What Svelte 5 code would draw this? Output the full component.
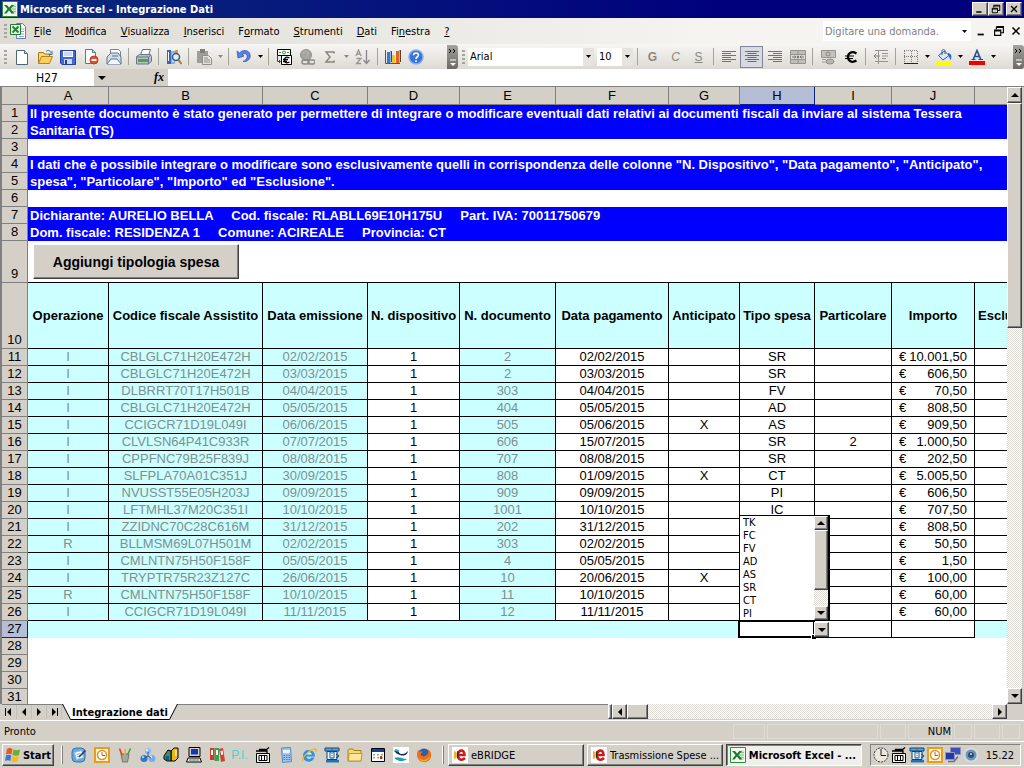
<script lang="ts">
  type Tool = { icon?: string; label?: string; arrow?: boolean; muted?: boolean; sep?: boolean; active?: boolean };

  const icons: Record<string, string> = {
    excel:
      '<path d="M.500.500h15v15H.500z" fill="#f4faf0" stroke="#2c8c3c"/><path d="M9 3h5v10H9z" fill="#d4ecd0"/><path d="M9 5.500h5M9 8h5M9 10.500h5" stroke="#8cc48c"/><path d="M2 4h3l2 2.500L9.500 4H12L8.500 8l4 4.500h-3L7 9.500 4.500 12.500H2L5.500 8z" fill="#1c7830"/>',
    sheet:
      '<path d="M6.500.500h6l3 3v12h-9z" fill="#fff" stroke="#5b7cc0"/><path d="M9 6h5M9 8.500h5M9 11h5M9 13.500h5" stroke="#8fa8dc"/><path d="M.500 1.500h10v10H.500z" fill="#e4f3e0" stroke="#1f7a34"/><path d="M2.500 3.500l6 6M8.500 3.500l-6 6" stroke="#238238" stroke-width="2"/>',
    blank: '<path d="M2.500 1.500h8l3 3v11h-11z" fill="#fff" stroke="#4a6484"/><path d="M10.500 1.500v3h3" fill="#c8dcf4" stroke="#4a6484"/>',
    open:
      '<path d="M1.500 14V3.500h5l1 1.500h5v3" fill="#f8d878" stroke="#a67a18"/><path d="M1.500 14.500l3-7h11l-3 7z" fill="#fcd058" stroke="#b4841c"/><path d="M9 2.500c2-2 4-1 5 1l1-1v3h-3l1-1" fill="none" stroke="#3c64a8"/>',
    save:
      '<path d="M.500 1.500h15v14H2l-1.500-1.500z" fill="#4468d4" stroke="#24409c"/><path d="M3 2h10v6H3z" fill="#f4f8ff"/><path d="M4 10h8v5H4z" fill="#ccd8f0"/><path d="M5 11h2v4H5z" fill="#24409c"/><path d="M4 4h8M4 6h8" stroke="#a4b8e8"/>',
    deny:
      '<path d="M2.500.500h7l3 3v11h-10z" fill="#fff" stroke="#5878a0"/><path d="M9.500.500v3h3" fill="#b8ccec" stroke="#5878a0"/><circle cx="11" cy="11" r="4" fill="#e4502c" stroke="#c03c1c"/><path d="M8.500 11h5" stroke="#fff" stroke-width="2"/>',
    mail:
      '<path d="M4.500 5V.500h8l2 2V12" fill="#fff" stroke="#70849c"/><path d="M1 8l4-4h7l3 4v7H1z" fill="#d0dcec" stroke="#60748c"/><path d="M1 15l4-5h6l4 5" fill="#f4f8fc" stroke="#60748c"/><path d="M6 7h6" stroke="#60748c"/>',
    print:
      '<path d="M4.500 6l2-5.500h8l-2 6" fill="#fff" stroke="#607490"/><path d="M.500 7.500l3-2h11l1 2v5l-3 2.500h-12z" fill="#b8c0cc" stroke="#687888"/><path d="M2 10h10v3H2z" fill="#44a848"/><path d="M.500 8h12l2.500-2M12.500 8v7" stroke="#687888" fill="none"/>',
    research:
      '<path d="M1 1h4v14H1z" fill="#3468c0"/><path d="M5 2h4v13H5z" fill="#88b0e8"/><path d="M2.500 3v9M7 4v9" stroke="#fff"/><path d="M9 1h3v7H9z" fill="#d0a030"/><circle cx="10" cy="8" r="3.500" fill="#dceeff" stroke="#405878" stroke-width="1.500"/><path d="M12.500 11l3 4" stroke="#b07820" stroke-width="2"/>',
    paste:
      '<path d="M1 2h11v12H1z" fill="#a09e98"/><path d="M4 0h5v4H4z" fill="#808078"/><path d="M6.500 6.500h6l3 3v6h-9z" fill="#e4e2dc" stroke="#90908a"/><path d="M8 9h4M8 11h6M8 13h6" stroke="#90908a"/>',
    undo: '<path d="M1 2l1 7 6-2-2-1.500c3-2 6 0 5 3-.5 2-2 3-4 4 5 .5 8-3 7-7C13 1 7 0 3.500 4z" fill="#5484e4" stroke="#2850b0" stroke-width=".7"/>',
    convert:
      '<path d="M1.500.500h13v6h-13z" fill="#fff" stroke="#000"/><circle cx="8" cy="3.500" r="1.500" fill="none" stroke="#18a030"/><path d="M3 3.500h2M11 3.500h2" stroke="#18a030"/><path d="M5.500 6.500h10v9h-10z" fill="#fff" stroke="#000"/><path d="M13.500 9c-4-2-5 0-5 2s1 4 5 2M7 10.500h5M7 12.500h4" fill="none" stroke="#000" stroke-width="1.300"/><path d="M1.500 7v5.500H4M3 11l1.500 1.500L3 14" fill="none" stroke="#1848c0"/>',
    globe:
      '<circle cx="7" cy="6" r="5.500" fill="#a6a49e" stroke="#94928c"/><path d="M3 5c2-3 5-3 6-1s-2 3-2 5" stroke="#bcbab4" fill="none"/><rect x="3" y="11" width="7" height="4" rx="2" fill="none" stroke="#8c8a84" stroke-width="1.500"/><rect x="9" y="11" width="7" height="4" rx="2" fill="none" stroke="#8c8a84" stroke-width="1.500"/>',
    sum: '<path d="M12 4.500V3H4l4 5-4 5h8v-1.500" fill="none" stroke="#888680" stroke-width="1.500"/>',
    sort:
      '<path d="M1 7l2.500-6L6 7M2 5h3M1.500 9.500H6L1.500 14.500H6" fill="none" stroke="#98968f" stroke-width="1.300"/><path d="M11.500 1v13M8.500 11l3 3.500 3-3.500" fill="none" stroke="#88868f" stroke-width="1.300"/>',
    chart:
      '<path d="M.500 1v13.500H15" fill="none" stroke="#285cb0"/><path d="M2 3h3.500v11H2z" fill="#3878d8"/><path d="M6.500 6H10v8H6.500z" fill="#f0c038"/><path d="M11 2h3.500v12H11z" fill="#e06028"/><path d="M5.500 3l1-1v11M14.500 2l1-1v12" stroke="#60402c" fill="none"/>',
    help:
      '<circle cx="8" cy="8" r="7" fill="#3474e0" stroke="#8cb0ec" stroke-width="1.500"/><path d="M5.500 6.300c0-3 5-3 5-.3C10.500 8 8 7.500 8 10" fill="none" stroke="#fff" stroke-width="1.600"/><path d="M7.200 11.300h1.600v1.600H7.200z" fill="#fff"/>',
    left: '<path d="M1 2.500h14M1 4.500h9M1 6.500h14M1 8.500h9M1 10.500h14M1 12.500h9" stroke="#74726c"/>',
    center: '<path d="M1 2.500h14M3.500 4.500h9M1 6.500h14M3.500 8.500h9M1 10.500h14M3.500 12.500h9" stroke="#686c78"/>',
    right: '<path d="M1 2.500h14M6 4.500h9M1 6.500h14M6 8.500h9M1 10.500h14M6 12.500h9" stroke="#74726c"/>',
    merge:
      '<path d="M.500 1.500h15v13H.500z" fill="#c0beb8" stroke="#96948e"/><path d="M1 5.500h14M1 10.500h14M8 1v4M8 11v4" stroke="#96948e"/><path d="M1 6h14v4H1z" fill="#dedcd6"/><path d="M2 8h4M10 8h4M4.500 6.500L6 8 4.500 9.500M11.500 6.500L10 8l1.500 1.500M7.500 7h1v2h-1z" stroke="#76746e" fill="none"/>',
    money:
      '<path d="M1.500 1.500h14v7h-14z" fill="#c4c2bc" stroke="#94928c"/><circle cx="8" cy="5" r="2" fill="none" stroke="#86847e"/><ellipse cx="10" cy="12.500" rx="4" ry="2.500" fill="#b8b6b0" stroke="#8e8c86"/><path d="M2 10.500h4M2 13h4" stroke="#9e9c96"/>',
    euro: '<path d="M13.500 4.500C8.500 1.500 5 4.300 5 8s3.500 6.500 8.500 3.500" fill="none" stroke="#000" stroke-width="2.200"/><path d="M2 7h9M2 9.500h8" stroke="#000" stroke-width="1.200"/>',
    indent:
      '<path d="M2 1.500h13M9 4.500h6M9 7h6M9 9.500h4M2 12.500h13M5.500 1v14" stroke="#96948e"/><path d="M1 7h6M3.500 4.500L1 7l2.500 2.500" stroke="#86847e" fill="none"/>',
    borders:
      '<path d="M1.500 2v12M8.500 2v12M14.500 2v12M1 1.500h14M1 7.500h14" stroke="#7a7872" stroke-dasharray="1 1"/><path d="M1 14.500h14" stroke="#222"/>',
    fill:
      '<path d="M2.500 6.500l6-4.500 4.500 4.500-6 4.500z" fill="#dce8f8" stroke="#345c9c"/><path d="M6 6V2c0-2 3-2 3 0v3" fill="none" stroke="#345c9c"/><path d="M12 4c4 1 4 4 2.500 7-1-1-1-4-2.500-5z" fill="#2c64c4"/><path d="M0 12h16v4H0z" fill="#ffff00"/>',
    fontcolor:
      '<path d="M4 11L8 1.500l4 9.500M5.500 7.500h5" fill="none" stroke="#284c94" stroke-width="1.600"/><path d="M2.500 10.500h4M9.500 10.500H14" stroke="#284c94"/><path d="M0 12h16v4H0z" fill="#f00000"/>',
    windows:
      '<path d="M2 2c2-1.500 4-1 5.500 0L6.500 7.500C5 6.500 3 6.500 1 7.500z" fill="#e85820"/><path d="M8.500 2.500c2 1 4 1 6.500 0L14 8c-2 1-4.500 1-6.500 0z" fill="#68b030"/><path d="M1 8.500c2-1 4-1 5.300 0L5.300 14c-1.500-1-3.300-1-5.300 0z" fill="#3878d8"/><path d="M7.300 9c2 1 4.500 1 6.500 0l-1 5.500c-2 1-4.500 1-6.500 0z" fill="#f4bc20"/>',
    desktop:
      '<rect x="1" y="1" width="13" height="14" rx="4" fill="#64a8e0" stroke="#3078b8"/><path d="M3.500 5.500l7-2 2 7-7 2z" fill="#fff" stroke="#a4bcd4"/><path d="M5.500 7.500l4-1M6 9.500l4-1" stroke="#88a8c8"/><path d="M8 10l6.500-6.500" stroke="#203c68" stroke-width="1.600"/>',
    outlook:
      '<path d="M1 1h14v14H1z" fill="#fff4d8" stroke="#e89c20" stroke-width="2"/><circle cx="8" cy="8" r="4.500" fill="#fff" stroke="#dc9428" stroke-width="1.500"/><path d="M8 5v3.500h3" fill="none" stroke="#a4681c"/>',
    pencils:
      '<path d="M4 7l1.500 8h5L12 7z" fill="#a4a8a0" stroke="#747870"/><path d="M5 8L2.500 1.500" stroke="#d84020" stroke-width="1.600"/><path d="M8 8V2" stroke="#e8b028" stroke-width="1.600"/><path d="M10.500 8l3-6.500" stroke="#489c40" stroke-width="1.600"/>',
    cubes:
      '<circle cx="8" cy="4" r="3" fill="#8cb8ec"/><circle cx="7" cy="3" r="1.200" fill="#d8ecff"/><circle cx="4" cy="11.500" r="3.500" fill="#3874c4"/><circle cx="3" cy="10" r="1.200" fill="#a0c8f4"/><circle cx="12" cy="11.500" r="3.500" fill="#78acec"/><circle cx="11" cy="10" r="1.200" fill="#d8ecff"/><path d="M8 5v4l-3 2M8 9l3 2" fill="none" stroke="#2858a0"/>',
    shapes:
      '<path d="M8 14V4l3-3h4v10l-3 3z" fill="#e8b420" stroke="#000"/><path d="M1 9l4-6 3 1v10H4l-3-2z" fill="#38984c" stroke="#000"/><path d="M12 3h2v6h-2z" fill="#fce078"/><path d="M3 9h3v4H3z" fill="#185090"/>',
    computer:
      '<path d="M3 .500h11v9H3z" fill="#d4d0c8" stroke="#000"/><path d="M5 2h7v5.500H5z" fill="#1038b8"/><path d="M2 11h12l1.500 4H.500z" fill="#f0eee8" stroke="#000"/><path d="M3 13h10" stroke="#707068"/>',
    binders:
      '<path d="M1 1h4.500v12H1z" fill="#d83828"/><path d="M5.500 1H10v13H5.500z" fill="#3ca050"/><path d="M10 2l4-1 2 13-4 1z" fill="#c84438"/><path d="M2 3h2v5H2zM7 3h2v5H7zM11.500 4l2-.500.7 4-2 .500z" fill="#fff"/>',
    phone:
      '<path d="M1.500 6.500h13v9h-13z" fill="#f4f2ec" stroke="#000"/><path d="M1 4h11v2M4.500 4V2.500h6V4M11 3l3-2.500" fill="none" stroke="#000" stroke-width="1.300"/><path d="M4 8.500h8v5H4z" fill="#fff" stroke="#000"/><path d="M6.500 9v4M9.500 9v4" stroke="#000"/>',
    calc:
      '<path d="M3.500 1l9-.5 1 14-9 1z" fill="#a0c4f0" stroke="#5888c4"/><path d="M5 3h7v3H5z" fill="#e8f4ff"/><path d="M5.500 8.500h7M5.500 10.500h7M5.500 12.500h7" stroke="#4878b8" stroke-dasharray="1.500 1"/>',
    ie:
      '<path d="M13.500 10.500C11 17 2 15.500 2 9c0-8 12-8 12 .5H5.500c.5 3.500 4 3 4.800 1z" fill="#2c94e4"/><path d="M5.500 7.500h5.300c-.5-3-4.800-3-5.300 0z" fill="#e4f4ff"/><path d="M2 14.500C-1 12 9 1.500 15 2c.8.8 0 2-1 3.500" fill="none" stroke="#f0b828" stroke-width="1.300"/>',
    zip:
      '<path d="M1 1h14v3H1z" fill="#58a8e0" stroke="#10406c"/><path d="M3 4.500h10v8H3z" fill="#e4f2fc" stroke="#10406c"/><path d="M6 5h4v6H6z" fill="#fff" stroke="#1c5c9c"/><path d="M8 2v10" stroke="#1c5c9c" stroke-dasharray="1 1"/><path d="M2 13h13v2.500H2z" fill="#2870b0"/><path d="M12 7l3 2-3 2" fill="none" stroke="#10406c"/>',
    folder: '<path d="M1 3.500l1-1.500h4l1 1.500h7V14H1z" fill="#f8d870" stroke="#a88018"/><path d="M2 6.500h13L14 14H1.500z" fill="#fce8a0" stroke="#c49828"/>',
    calendar:
      '<path d="M1.500 1.500h13v13h-13z" fill="#fff" stroke="#000"/><path d="M2 2h12v3H2z" fill="#1c3c98"/><path d="M4 7v6M8 7v6M12 7v6" stroke="#40a060" stroke-width="1.500" stroke-dasharray="1.500 1.500"/><path d="M10 9h2v3h-2z" fill="#d02818"/>',
    swirl:
      '<path d="M0 0h16v16H0z" fill="#fff"/><path d="M1 4c5-3 4 3 8 3 3 0 4-1 6-3-1 5-5 5-8 4S3 6 1 4z" fill="#182c58"/><path d="M1 11c5-2 8 1 13 1-4 3-8 3-13-1z" fill="#209cb4"/><path d="M2 3l4 1" stroke="#38acc8" stroke-width="2"/>',
    firefox:
      '<circle cx="8" cy="8" r="6.500" fill="#2c60ac"/><path d="M2 3c-2 5-1 11 5 12 6 1 9-4 8-9-1-2-2-3-3-4 1 3 0 6-3 7-3 1-5-1-4-3l2-1C5 4 4 4 3.500 5z" fill="#ec7018"/><path d="M3 11c3 3 8 3 11-2-1 5-8 8-11 2z" fill="#f8b830"/>',
    ebridge:
      '<path d="M0 0h16v16H0z" fill="#fff"/><path d="M6 8h6.500c0-7-7.500-5-6.500 1 .5 4 4 5 7 2" fill="none" stroke="#d01818" stroke-width="2.600"/><path d="M2 4l2.500 1v6L2 12z" fill="#f0b020"/><path d="M5 4l1.500 1v5L5 11z" fill="#383020"/>',
    clock: '<circle cx="8" cy="8" r="7" fill="#ece8e0" stroke="#303030" stroke-dasharray="2 1"/><path d="M8 2v6.500h5" fill="none" stroke="#202020"/>',
    network:
      '<path d="M5.500.500h10v7h-10z" fill="#3850c4" stroke="#9094b0"/><path d="M.500 5.500h9v7h-9z" fill="#2438a8" stroke="#9098c0"/><path d="M3 14.500h6l4-5" stroke="#686c90" fill="none" stroke-width="1.500"/>',
    disc: '<circle cx="8" cy="8" r="6.500" fill="#7894b0" stroke="#d0dce8" stroke-width="2"/><circle cx="8" cy="8" r="3" fill="#285078"/><circle cx="8" cy="7" r="1" fill="#c8dcf0"/>',
    min: '<path d="M3 11h7v2H3z" fill="#000"/>',
    restore: '<path d="M5 3h8v7h-3M5 3v3M5 4h8M3 7h7v6H3zM3 8h7" fill="none" stroke="#000" stroke-width="1.300"/>',
    close: '<path d="M4 4l8 8M12 4l-8 8" stroke="#000" stroke-width="1.800"/>',
    up: '<path d="M4 10l4-4 4 4z" fill="#000"/>',
    down: '<path d="M4 6h8l-4 4z" fill="#000"/>',
    prev: '<path d="M10 4v8L6 8z" fill="#000"/>',
    next: '<path d="M6 4v8l4-4z" fill="#000"/>',
    first: '<path d="M10 4v8L6 8z" fill="#000"/><path d="M4.500 4v8" stroke="#000"/>',
    last: '<path d="M6 4v8l4-4z" fill="#000"/><path d="M11.500 4v8" stroke="#000"/>'
  };

  const menus = [
    ['', 'F', 'ile'],
    ['', 'M', 'odifica'],
    ['', 'V', 'isualizza'],
    ['', 'I', 'nserisci'],
    ['F', 'o', 'rmato'],
    ['', 'S', 'trumenti'],
    ['', 'D', 'ati'],
    ['Fi', 'n', 'estra'],
    ['', '?', '']
  ];

  const standard: Tool[] = [
    { icon: 'blank', label: 'Nuovo' },
    { icon: 'open', label: 'Apri' },
    { icon: 'save', label: 'Salva' },
    { icon: 'deny', label: 'Autorizzazione' },
    { icon: 'mail', label: 'Posta elettronica' },
    { sep: true },
    { icon: 'print', label: 'Stampa' },
    { sep: true },
    { icon: 'research', label: 'Ricerche' },
    { sep: true },
    { icon: 'paste', label: 'Incolla', arrow: true, muted: true },
    { sep: true },
    { icon: 'undo', label: 'Annulla', arrow: true },
    { sep: true },
    { icon: 'convert', label: 'Conversione euro' },
    { icon: 'globe', label: 'Collegamento' },
    { icon: 'sum', label: 'Somma', arrow: true, muted: true },
    { icon: 'sort', label: 'Ordina' },
    { sep: true },
    { icon: 'chart', label: 'Grafico' },
    { icon: 'help', label: 'Guida' }
  ];

  const formatting: Tool[] = [
    { sep: true },
    { icon: 'left', label: 'Allinea a sinistra' },
    { icon: 'center', label: 'Centra', active: true },
    { icon: 'right', label: 'Allinea a destra' },
    { icon: 'merge', label: 'Unisci e centra' },
    { sep: true },
    { icon: 'money', label: 'Valuta' },
    { icon: 'euro', label: 'Euro' },
    { sep: true },
    { icon: 'indent', label: 'Riduci rientro' },
    { sep: true },
    { icon: 'borders', label: 'Bordi', arrow: true },
    { icon: 'fill', label: 'Colore riempimento', arrow: true },
    { icon: 'fontcolor', label: 'Colore carattere', arrow: true }
  ];

  const letters = ['A', 'B', 'C', 'D', 'E', 'F', 'G', 'H', 'I', 'J', ''];

  const banners = [
    'Il presente documento è stato generato per permettere di integrare o modificare eventuali dati relativi ai documenti fiscali da inviare al sistema Tessera',
    'Sanitaria (TS)',
    '',
    'I dati che è possibile integrare o modificare sono esclusivamente quelli in corrispondenza delle colonne "N. Dispositivo", "Data pagamento", "Anticipato",',
    'spesa", "Particolare", "Importo" ed "Esclusione".',
    '',
    'Dichiarante: AURELIO BELLA     Cod. fiscale: RLABLL69E10H175U     Part. IVA: 70011750679',
    'Dom. fiscale: RESIDENZA 1     Comune: ACIREALE     Provincia: CT'
  ];

  const headings = [
    'Operazione',
    'Codice fiscale Assistito',
    'Data emissione',
    'N. dispositivo',
    'N. documento',
    'Data pagamento',
    'Anticipato',
    'Tipo spesa',
    'Particolare',
    'Importo',
    'Esclusione'
  ];

  const rows = [
    ['I', 'CBLGLC71H20E472H', '02/02/2015', '1', '2', '02/02/2015', '', 'SR', '', '10.001,50'],
    ['I', 'CBLGLC71H20E472H', '03/03/2015', '1', '2', '03/03/2015', '', 'SR', '', '606,50'],
    ['I', 'DLBRRT70T17H501B', '04/04/2015', '1', '303', '04/04/2015', '', 'FV', '', '70,50'],
    ['I', 'CBLGLC71H20E472H', '05/05/2015', '1', '404', '05/05/2015', '', 'AD', '', '808,50'],
    ['I', 'CCIGCR71D19L049I', '06/06/2015', '1', '505', '05/06/2015', 'X', 'AS', '', '909,50'],
    ['I', 'CLVLSN64P41C933R', '07/07/2015', '1', '606', '15/07/2015', '', 'SR', '2', '1.000,50'],
    ['I', 'CPPFNC79B25F839J', '08/08/2015', '1', '707', '08/08/2015', '', 'SR', '', '202,50'],
    ['I', 'SLFPLA70A01C351J', '30/09/2015', '1', '808', '01/09/2015', 'X', 'CT', '', '5.005,50'],
    ['I', 'NVUSST55E05H203J', '09/09/2015', '1', '909', '09/09/2015', '', 'PI', '', '606,50'],
    ['I', 'LFTMHL37M20C351I', '10/10/2015', '1', '1001', '10/10/2015', '', 'IC', '', '707,50'],
    ['I', 'ZZIDNC70C28C616M', '31/12/2015', '1', '202', '31/12/2015', '', '', '', '808,50'],
    ['R', 'BLLMSM69L07H501M', '02/02/2015', '1', '303', '02/02/2015', '', '', '', '50,50'],
    ['I', 'CMLNTN75H50F158F', '05/05/2015', '1', '4', '05/05/2015', '', '', '', '1,50'],
    ['I', 'TRYPTR75R23Z127C', '26/06/2015', '1', '10', '20/06/2015', 'X', '', '', '100,00'],
    ['R', 'CMLNTN75H50F158F', '10/10/2015', '1', '11', '10/10/2015', '', '', '', '60,00'],
    ['I', 'CCIGCR71D19L049I', '11/11/2015', '1', '12', '11/11/2015', '', '', '', '60,00']
  ];

  // columns that cannot be edited: operation, tax code, issue date, document number
  const locked = [0, 1, 2, 4];

  const types = ['TK', 'FC', 'FV', 'AD', 'AS', 'SR', 'CT', 'PI'];

  const quickLaunch = [
    'desktop', 'outlook', 'pencils', 'cubes', 'shapes', 'computer', 'binders', 'pi',
    'phone', 'calc', 'ie', 'zip', 'folder', 'calendar', 'swirl', 'firefox'
  ];

  const tasks = [
    { icon: 'ebridge', label: 'eBRIDGE', active: false },
    { icon: 'ebridge', label: 'Trasmissione Spese ...', active: false },
    { icon: 'excel', label: 'Microsoft Excel - ...', active: true }
  ];

  const tray = ['clock', 'phone', 'zip', 'outlook', 'network', 'disc'];

  let cellName = $state('H27');
  let formula = $state('');
  let question = $state('');
</script>

{#snippet icon(name: string)}
  <svg class="icon" viewBox="0 0 16 16" aria-hidden="true">{@html icons[name]}</svg>
{/snippet}

{#snippet caret()}
  <svg class="caret" viewBox="0 0 5 3" aria-hidden="true"><path d="M0 0h5L2.500 3z" fill="currentColor" /></svg>
{/snippet}

{#snippet tools(list: Tool[])}
  {#each list as tool}
    {#if tool.sep}
      <span class="sep"></span>
    {:else}
      <button class="tool" class:active={tool.active} aria-label={tool.label}>{@render icon(tool.icon ?? '')}</button>
      {#if tool.arrow}
        <button class="tool-arrow" class:muted={tool.muted} aria-label="{tool.label}, opzioni">{@render caret()}</button>
      {/if}
    {/if}
  {/each}
{/snippet}

{#snippet more()}
  <button class="more" aria-label="Opzioni barra degli strumenti">
    <svg viewBox="0 0 11 24" aria-hidden="true">
      <path d="M2 4l2 2-2 2M6 4l2 2-2 2" fill="none" stroke="#000" />
      <path d="M3 15h6" stroke="#fff" />
      <path d="M3 18h6l-3 3z" fill="#fff" />
    </svg>
  </button>
{/snippet}

<div class="app">
  <header class="titlebar">
    {@render icon('excel')}
    <h1>Microsoft Excel - Integrazione Dati</h1>
    <div class="window-buttons">
      <button class="raised" aria-label="Riduci a icona">{@render icon('min')}</button>
      <button class="raised" aria-label="Ripristina">{@render icon('restore')}</button>
      <button class="raised close" aria-label="Chiudi">{@render icon('close')}</button>
    </div>
  </header>

  <nav class="menubar">
    <span class="grip"></span>
    {@render icon('sheet')}
    <div class="menus">
      {#each menus as [before, key, after]}
        <button>{before}<u>{key}</u>{after}</button>
      {/each}
    </div>
    <div class="question">
      <input type="text" aria-label="Domanda" placeholder="Digitare una domanda." bind:value={question} />
      {@render caret()}
    </div>
    <div class="document-buttons">
      <button aria-label="Riduci cartella">{@render icon('min')}</button>
      <button aria-label="Ripristina cartella">{@render icon('restore')}</button>
      <button aria-label="Chiudi cartella">{@render icon('close')}</button>
    </div>
  </nav>

  <div class="toolbars">
    <div class="toolbar standard">
      <span class="grip"></span>
      {@render tools(standard)}
      {@render more()}
    </div>
    <div class="toolbar formatting">
      <span class="grip"></span>
      <div class="combo font">
        <select aria-label="Tipo di carattere"><option>Arial</option></select>
        <span class="combo-arrow">{@render caret()}</span>
      </div>
      <div class="combo size">
        <select aria-label="Dimensione carattere"><option>10</option></select>
        <span class="combo-arrow">{@render caret()}</span>
      </div>
      <span class="sep"></span>
      <button class="tool letter"><b>G</b></button>
      <button class="tool letter"><i>C</i></button>
      <button class="tool letter"><u>S</u></button>
      {@render tools(formatting)}
      {@render more()}
    </div>
  </div>

  <div class="formula-bar">
    <input class="name-box" type="text" aria-label="Casella nome" bind:value={cellName} />
    <button class="name-arrow" aria-label="Elenco nomi">{@render icon('down')}</button>
    <label class="fx" for="formula">fx</label>
    <input id="formula" class="formula" type="text" bind:value={formula} />
  </div>

  <main class="sheet">
    <div class="grid">
      <table>
        <colgroup>
          <col class="w-num" /><col class="w-a" /><col class="w-b" /><col class="w-c" /><col class="w-d" />
          <col class="w-e" /><col class="w-f" /><col class="w-g" /><col class="w-h" /><col class="w-i" />
          <col class="w-j" /><col class="w-k" />
        </colgroup>
        <thead>
          <tr class="letters">
            <th></th>
            {#each letters as letter}
              <th class:current={letter === 'H'}>{letter}</th>
            {/each}
          </tr>
        </thead>
        <tbody>
          {#each banners as text, i}
            <tr>
              <th>{i + 1}</th>
              <td colspan="11" class:banner={text}>{text}</td>
            </tr>
          {/each}
          <tr class="action">
            <th>9</th>
            <td colspan="11"><button class="raised add">Aggiungi tipologia spesa</button></td>
          </tr>
          <tr class="headings">
            <th>10</th>
            {#each headings as heading}
              <td>{heading}</td>
            {/each}
          </tr>
          {#each rows as row, r}
            <tr class="data">
              <th>{r + 11}</th>
              {#each row as cell, c}
                {#if c === 9}
                  <td><div class="amount"><span>€</span><span>{cell}</span></div></td>
                {:else}
                  <td class:locked={locked.includes(c)}>{cell}</td>
                {/if}
              {/each}
              <td></td>
            </tr>
          {/each}
          <tr class="entry">
            <th class="current">27</th>
            <td colspan="7" class="filler"></td>
            <td class="selected">
              <div class="cursor"></div>
              <div class="list">
                <select size="8" aria-label="Tipo spesa">
                  {#each types as type}
                    <option>{type}</option>
                  {/each}
                </select>
                <div class="list-scroll">
                  <button class="raised" aria-label="Su">{@render icon('up')}</button>
                  <span class="raised list-thumb"></span>
                  <button class="raised" aria-label="Giù">{@render icon('down')}</button>
                </div>
              </div>
              <button class="raised open-list" aria-label="Apri elenco">{@render icon('down')}</button>
            </td>
            <td></td>
            <td></td>
            <td class="filler"></td>
          </tr>
          {#each [28, 29, 30, 31] as n}
            <tr><th>{n}</th><td colspan="11"></td></tr>
          {/each}
        </tbody>
      </table>
    </div>
    <div class="scroll-y">
      <button class="raised" aria-label="Scorri su">{@render icon('up')}</button>
      <span class="raised thumb"></span>
      <button class="raised bottom" aria-label="Scorri giù">{@render icon('down')}</button>
    </div>
  </main>

  <div class="tabs">
    <div class="tab-area">
      {#each ['first', 'prev', 'next', 'last'] as name}
        <button class="tab-nav" aria-label={name}>{@render icon(name)}</button>
      {/each}
      <button class="tab">
        <svg viewBox="0 0 116 16" aria-hidden="true"><path d="M.500 0l8 15.500h99L115.500 0" fill="#fff" stroke="#000" /></svg>
        <span>Integrazione dati</span>
      </button>
    </div>
    <div class="scroll-x">
      <span class="raised splitter"></span>
      <button class="raised" aria-label="Scorri a sinistra">{@render icon('prev')}</button>
      <span class="raised thumb-x"></span>
      <button class="raised right" aria-label="Scorri a destra">{@render icon('next')}</button>
    </div>
  </div>

  <div class="status">
    <span class="ready">Pronto</span>
    <span class="panel insert"></span>
    <span class="panel wide"></span>
    <span class="panel"></span>
    <span class="panel num">NUM</span>
    <span class="panel short"></span>
    <span class="panel"></span>
    <span class="panel short"></span>
  </div>

  <footer class="taskbar">
    <button class="raised start">{@render icon('windows')}Start</button>
    <span class="divider"></span>
    <div class="quick">
      {#each quickLaunch as name}
        <button aria-label={name}>
          {#if name === 'pi'}<span class="pi">P.I.</span>{:else}{@render icon(name)}{/if}
        </button>
      {/each}
    </div>
    <span class="divider"></span>
    <div class="tasks">
      {#each tasks as task}
        <button class="raised task" class:pressed={task.active}>{@render icon(task.icon)}<span>{task.label}</span></button>
      {/each}
    </div>
    <div class="tray">
      {#each tray as name}
        {@render icon(name)}
      {/each}
      <time>15.22</time>
    </div>
  </footer>
</div>

<style>
  :global(body) {
    margin: 0;
  }

  .app {
    --face: #d4d0c8;
    --cyan: #ccffff;
    --track: repeating-conic-gradient(#fff 0 25%, #dedbd5 0 50%) 0 0 / 2px 2px;
    display: flex;
    flex-direction: column;
    height: 100vh;
    overflow: hidden;
    background: var(--face);
    color: #000;
    font-family: 'DejaVu Sans Condensed', 'DejaVu Sans', sans-serif;
    font-size: 11px;
  }

  .app * {
    box-sizing: border-box;
  }

  button,
  input,
  select {
    margin: 0;
    padding: 0;
    border: 0;
    border-radius: 0;
    background: none;
    color: inherit;
    font: inherit;
    outline: none;
  }

  button {
    display: flex;
    flex: none;
    align-items: center;
    justify-content: center;
  }

  .icon {
    display: block;
    flex: none;
    width: 16px;
    height: 16px;
  }

  .caret {
    display: block;
    flex: none;
    width: 5px;
    height: 3px;
  }

  .raised {
    background: var(--face);
    border: 1px solid;
    border-color: #fff #404040 #404040 #fff;
    box-shadow: inset -1px -1px #808080;
  }

  /* Title bar */
  .titlebar {
    display: flex;
    flex: none;
    align-items: center;
    gap: 2px;
    height: 18px;
    padding: 0 2px;
    background: linear-gradient(90deg, #0a2a7c, #00007c 70%);
    color: #fff;
  }

  h1 {
    flex: 1;
    margin: 0;
    font-size: 11px;
    font-weight: bold;
  }

  .window-buttons {
    display: flex;
  }

  .window-buttons button {
    width: 16px;
    height: 14px;
  }

  .window-buttons .close {
    margin-left: 2px;
  }

  .window-buttons .icon {
    width: 12px;
    height: 12px;
  }

  /* Menu bar */
  .menubar {
    display: flex;
    flex: none;
    align-items: center;
    height: 26px;
    background: linear-gradient(90deg, #dedbd4, #f5f4f1 70%);
  }

  .grip {
    flex: none;
    width: 3px;
    height: 14px;
    margin: 0 3px 0 4px;
    background: repeating-linear-gradient(#a8a59c 0 2px, transparent 2px 4px);
  }

  .menus {
    display: flex;
    flex: 1;
    padding-left: 1px;
  }

  .menus button {
    height: 20px;
    padding: 0 7px;
    white-space: pre;
  }

  .question {
    display: flex;
    align-items: center;
    width: 148px;
    height: 20px;
    padding: 0 4px 0 2px;
    background: #fff;
  }

  .question input {
    flex: 1;
    min-width: 0;
  }

  .question input::placeholder {
    color: #808080;
  }

  .document-buttons {
    display: flex;
    padding-left: 2px;
  }

  .document-buttons button {
    width: 17px;
    height: 18px;
  }

  .document-buttons .icon {
    width: 14px;
    height: 14px;
  }

  /* Toolbars */
  .toolbars {
    display: flex;
    flex: none;
    height: 25px;
    background: var(--face);
  }

  .toolbar {
    display: flex;
    align-items: center;
    background: linear-gradient(#f7f6f4, #dddad3);
  }

  .standard {
    width: 458px;
  }

  .formatting {
    flex: 1;
  }

  .tool {
    width: 23px;
    height: 22px;
  }

  .tool.active {
    border: 1px solid #808698;
    background: #d8dae2;
  }

  .tool-arrow {
    width: 10px;
    height: 22px;
  }

  .tool-arrow.muted {
    color: #8a8882;
  }

  .sep {
    flex: none;
    width: 1px;
    height: 17px;
    margin: 0 3px;
    background: #a5a299;
  }

  .letter {
    color: #8a8882;
    font-size: 12px;
    font-family: 'Liberation Sans', Arial, sans-serif;
  }

  .more {
    width: 11px;
    height: 24px;
    margin-left: auto;
    border-radius: 0 3px 3px 0;
    background: linear-gradient(#a4a29c, #6c6a66);
  }

  .more svg {
    width: 11px;
    height: 24px;
  }

  .combo {
    display: flex;
    height: 18px;
    margin-right: 3px;
    background: #fff;
  }

  .combo.font {
    width: 126px;
  }

  .combo.size {
    width: 36px;
    margin-right: 1px;
  }

  .combo select {
    flex: 1;
    min-width: 0;
    padding-left: 2px;
    appearance: none;
  }

  .combo-arrow {
    display: flex;
    flex: none;
    align-items: center;
    justify-content: center;
    width: 11px;
    background: #e6e4df;
  }

  /* Formula bar */
  .formula-bar {
    display: flex;
    flex: none;
    height: 17px;
    background: var(--face);
  }

  .name-box {
    width: 94px;
    background: #fff;
    font-size: 12px;
    text-align: center;
  }

  .name-arrow {
    width: 16px;
  }

  .fx {
    flex: none;
    width: 58px;
    padding-right: 4px;
    font: italic bold 12px/17px 'Liberation Serif', serif;
    text-align: right;
  }

  .formula {
    flex: 1;
    background: #fff;
  }

  /* Worksheet */
  .sheet {
    display: flex;
    flex: 1;
    min-height: 0;
    border: solid #808080;
    border-width: 1px 0 0 2px;
    background: #fff;
  }

  .grid {
    flex: 1;
    min-width: 0;
    overflow: hidden;
  }

  table {
    width: 1049px;
    border-collapse: separate;
    border-spacing: 0;
    table-layout: fixed;
    font-family: 'Liberation Sans', Arial, sans-serif;
    font-size: 13px;
    line-height: 16px;
  }

  .w-num { width: 26px; }
  .w-a { width: 81px; }
  .w-b { width: 154px; }
  .w-c { width: 105px; }
  .w-d { width: 92px; }
  .w-e { width: 96px; }
  .w-f { width: 113px; }
  .w-g { width: 71px; }
  .w-h { width: 75px; }
  .w-i { width: 77px; }
  .w-j { width: 83px; }
  .w-k { width: 76px; }

  tr {
    height: 17px;
  }

  th {
    padding: 0;
    border: solid #808080;
    border-width: 0 1px 1px 0;
    background: var(--face);
    font-weight: normal;
    vertical-align: bottom;
  }

  td {
    padding: 0;
    white-space: nowrap;
  }

  .letters {
    height: 18px;
  }

  th.current {
    border-color: #10207c;
    background: #b6bdd6;
  }

  .banner {
    padding-left: 2px;
    background: #0000ff;
    color: #fff;
    font-weight: bold;
    white-space: pre;
  }

  .action {
    height: 42px;
  }

  .action td {
    padding-left: 5px;
    border-bottom: 1px solid #000;
  }

  .add {
    width: 206px;
    height: 35px;
    font-size: 14px;
    font-weight: bold;
  }

  .headings {
    height: 66px;
  }

  .headings td,
  .data td,
  .entry td {
    border: solid #000;
    border-width: 0 1px 1px 0;
    text-align: center;
  }

  .headings td {
    background: var(--cyan);
    font-weight: bold;
  }

  .headings td:last-child {
    padding-left: 3px;
    text-align: left;
  }

  .data .locked {
    background: var(--cyan);
    color: #7d8f8f;
  }

  .amount {
    display: flex;
    justify-content: space-between;
    padding: 0 7px;
  }

  .entry .filler {
    border: 0;
    background: var(--cyan);
  }

  .entry .selected {
    position: relative;
  }

  .cursor {
    position: absolute;
    inset: -1px -1px -1px -2px;
    border: 2px solid #000;
  }

  .cursor::after {
    position: absolute;
    right: -3px;
    bottom: -3px;
    width: 4px;
    height: 4px;
    border: solid #fff;
    border-width: 1px 0 0 1px;
    background: #000;
    content: '';
  }

  .list {
    position: absolute;
    bottom: 100%;
    left: -1px;
    z-index: 1;
    display: flex;
    width: 91px;
    height: 106px;
    border: solid #000;
    border-width: 1px 2px 1px 1px;
    background: #fff;
  }

  .list select {
    flex: 1;
    min-width: 0;
    height: 104px;
    overflow: hidden;
    font: 11px/13px 'DejaVu Sans Condensed', 'DejaVu Sans', sans-serif;
  }

  .list option {
    min-height: 13px;
    height: 13px;
    padding: 0 3px;
  }

  .list-scroll {
    display: flex;
    flex-direction: column;
    width: 14px;
    background: var(--track);
  }

  .list-scroll button {
    width: 14px;
    height: 14px;
  }

  .list-thumb {
    height: 60px;
    margin-bottom: auto;
  }

  .open-list {
    position: absolute;
    top: 1px;
    left: 100%;
    width: 15px;
    height: 15px;
  }

  /* Scroll bars */
  .scroll-y {
    display: flex;
    flex: none;
    flex-direction: column;
    width: 17px;
    border-right: 2px solid var(--face);
    background: var(--track);
  }

  .scroll-y button {
    width: 15px;
    height: 16px;
  }

  .scroll-y .thumb {
    height: 225px;
  }

  .scroll-y .bottom {
    margin-top: auto;
  }

  .tabs {
    display: flex;
    flex: none;
    height: 17px;
    padding: 0 17px 1px 2px;
    border-bottom: 1px solid #fff;
  }

  .tab-area {
    display: flex;
    flex: 38;
    border-top: 1px solid #808080;
  }

  .tab-nav {
    width: 15px;
    border-right: 1px solid #c4c0b8;
  }

  .tab {
    position: relative;
    width: 116px;
    font-weight: bold;
  }

  .tab svg {
    position: absolute;
    inset: -1px 0 0;
    width: 116px;
    height: 16px;
  }

  .tab span {
    position: relative;
  }

  .scroll-x {
    display: flex;
    flex: 25;
    background: var(--track);
  }

  .scroll-x button {
    width: 15px;
  }

  .splitter {
    width: 4px;
  }

  .thumb-x {
    width: 21px;
  }

  .scroll-x .right {
    margin-left: auto;
  }

  /* Status bar */
  .status {
    display: flex;
    flex: none;
    align-items: center;
    gap: 2px;
    height: 20px;
    padding: 0 4px;
  }

  .ready {
    flex: 1;
  }

  .panel {
    width: 26px;
    height: 15px;
    border: 1px solid #dfdcd5;
    line-height: 13px;
    text-align: right;
  }

  .panel.insert {
    width: 32px;
  }

  .panel.wide {
    width: 111px;
  }

  .panel.num {
    width: 44px;
  }

  .panel.short {
    width: 18px;
  }

  /* Taskbar */
  .taskbar {
    display: flex;
    flex: none;
    align-items: center;
    gap: 4px;
    height: 27px;
    padding: 0 3px 0 2px;
    border-top: 1px solid #fff;
  }

  .start {
    gap: 2px;
    width: 52px;
    height: 22px;
    font-weight: bold;
  }

  .divider {
    flex: none;
    width: 2px;
    height: 18px;
    margin-left: 3px;
    border: solid;
    border-color: #fff #808080 #808080 #fff;
    border-width: 0 1px;
  }

  .quick {
    display: flex;
    flex: none;
  }

  .quick button {
    width: 23px;
    height: 22px;
  }

  .pi {
    color: #48d4c8;
    font: 12px 'Liberation Sans', Arial, sans-serif;
  }

  .tasks {
    display: flex;
    flex: 1;
    gap: 3px;
    min-width: 0;
  }

  .task {
    flex: 1;
    gap: 3px;
    justify-content: flex-start;
    min-width: 0;
    max-width: 160px;
    height: 22px;
    padding-left: 3px;
    white-space: nowrap;
  }

  .task.pressed {
    border-color: #404040 #fff #fff #404040;
    background: #f1efeb;
    box-shadow: inset 1px 1px #808080;
    font-weight: bold;
  }

  .tray {
    display: flex;
    flex: none;
    align-items: center;
    gap: 2px;
    height: 22px;
    margin-left: 4px;
    padding: 0 6px 0 2px;
    border: 1px solid;
    border-color: #808080 #fff #fff #808080;
  }

  .tray time {
    margin-left: 5px;
  }
</style>
